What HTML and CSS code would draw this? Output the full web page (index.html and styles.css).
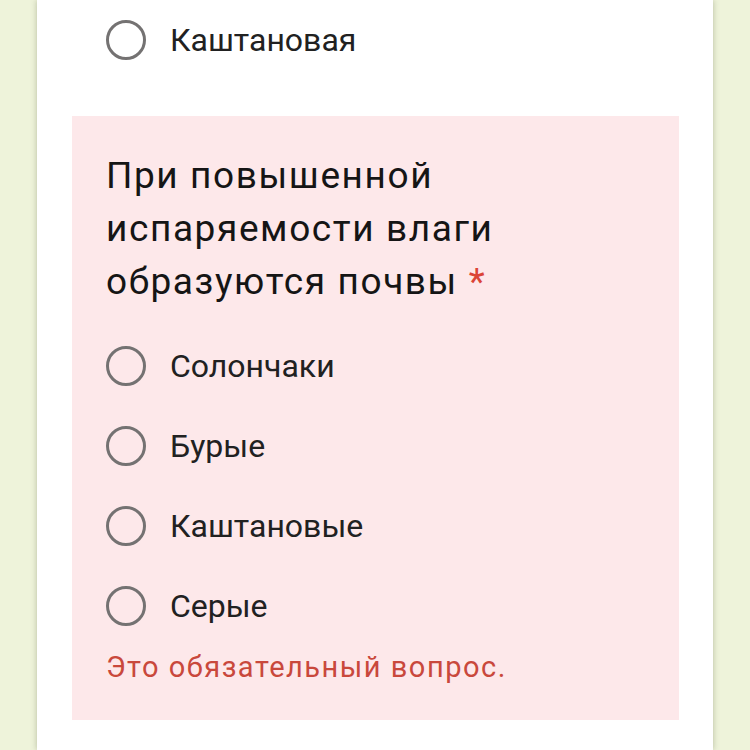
FILE: index.html
```html
<!DOCTYPE html>
<html lang="ru">
<head>
<meta charset="utf-8">
<link rel="stylesheet" href="styles.css">
</head>
<body>
<div class="card">
  <div class="option top-option"><span class="radio"></span><span class="label">Каштановая</span></div>
  <div class="question error">
    <div class="title">При повышенной испаряемости влаги образуются почвы <span class="star">*</span></div>
    <div class="options">
      <div class="option"><span class="radio"></span><span class="label">Солончаки</span></div>
      <div class="option"><span class="radio"></span><span class="label">Бурые</span></div>
      <div class="option"><span class="radio"></span><span class="label">Каштановые</span></div>
      <div class="option"><span class="radio"></span><span class="label">Серые</span></div>
    </div>
    <div class="msg">Это обязательный вопрос.</div>
  </div>
</div>
</body>
</html>
```
FILE: styles.css
```css
html, body {
  margin: 0;
  padding: 0;
  height: 100%;
}
body {
  background: #eef3da;
  font-family: Roboto, "Noto Sans", sans-serif;
  color: #212121;
  overflow: hidden;
}
.card {
  margin-left: 37px;
  width: 676px;
  min-height: 750px;
  background: #fff;
  box-shadow: 0 0 6px rgba(80, 90, 50, 0.35);
  padding: 0 34px 0 35px;
  box-sizing: border-box;
}
.option {
  display: flex;
  align-items: center;
  height: 80px;
}
.top-option {
  padding-left: 34px;
  margin-bottom: 36px;
}
.radio {
  width: 40px;
  height: 40px;
  box-sizing: border-box;
  border: 3px solid #747272;
  border-radius: 50%;
  flex: none;
}
.label {
  margin-left: 24px;
  font-size: 32px;
}
.question {
  background: #fde8ea;
  padding: 33px 34px 38px 34px;
}
.title {
  font-size: 37px;
  letter-spacing: 1.6px;
  line-height: 53px;
  width: 470px;
  color: #151515;
}
.star {
  color: #db4437;
}
.options {
  margin-top: 18px;
}
.msg {
  margin-top: 6px;
  font-size: 29px;
  letter-spacing: 1.5px;
  line-height: 30px;
  color: #c9483c;
}
```
